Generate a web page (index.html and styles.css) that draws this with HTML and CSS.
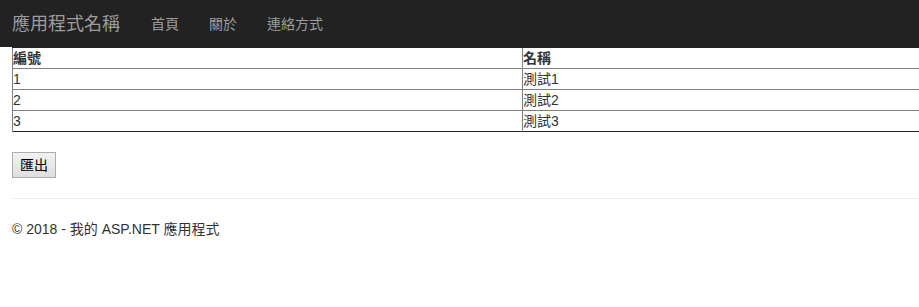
FILE: index.html
```html
<!DOCTYPE html>
<html lang="zh-Hant">
<head>
    <meta charset="UTF-8">
    <meta name="viewport" content="width=device-width, initial-scale=1.0">
    <title>首頁 - 我的 ASP.NET 應用程式</title>
    <link rel="stylesheet" href="styles.css">
</head>
<body>
    <div class="navbar">
        <a class="navbar-brand" href="#">應用程式名稱</a>
        <ul class="nav">
            <li><a href="#">首頁</a></li>
            <li><a href="#">關於</a></li>
            <li><a href="#">連絡方式</a></li>
        </ul>
    </div>

    <div class="body-content">
        <table class="grid">
            <thead>
                <tr>
                    <th class="col-id">編號</th>
                    <th>名稱</th>
                </tr>
            </thead>
            <tbody>
                <tr>
                    <td>1</td>
                    <td>測試1</td>
                </tr>
                <tr>
                    <td>2</td>
                    <td>測試2</td>
                </tr>
                <tr>
                    <td>3</td>
                    <td>測試3</td>
                </tr>
            </tbody>
        </table>

        <form class="export-form">
            <button type="button" class="btn-export">匯出</button>
        </form>

        <hr>
        <footer>
            <p>&copy; 2018 - 我的 ASP.NET 應用程式</p>
        </footer>
    </div>
</body>
</html>
```

FILE: styles.css
```css
html {
    overflow: hidden;
}
body {
    margin: 0;
    font-family: "Liberation Sans", Arial, "Noto Sans CJK TC", sans-serif;
    font-size: 14px;
    line-height: 20px;
    color: #333;
    background: #fff;
}
.navbar {
    display: flex;
    align-items: center;
    height: 47px;
    background: #222;
    padding-left: 12px;
}
.navbar-brand {
    font-size: 18px;
    line-height: 20px;
    color: #9d9d9d;
    text-decoration: none;
    margin-right: 31px;
}
.nav {
    display: flex;
    gap: 30px;
    list-style: none;
    margin: 0;
    padding: 0;
}
.nav a {
    display: block;
    color: #9d9d9d;
    text-decoration: none;
}
.body-content {
    padding: 0 0 20px 12px;
}
.grid {
    border-collapse: collapse;
    width: 1022px;
    border: 1px solid #222;
}
.grid th,
.grid td {
    padding: 0;
    text-align: left;
    border-left: 1px solid #808080;
    border-top: 1px solid #808080;
    height: 20px;
}
.grid th {
    font-weight: bold;
    border-top: 1px solid #222;
}
.grid .col-id {
    width: 509px;
}
.export-form {
    margin: 20px 0 0;
}
.btn-export {
    font-family: "Liberation Sans", Arial, "Noto Sans CJK TC", sans-serif;
    font-size: 14px;
    line-height: 20px;
    color: #000;
    background: linear-gradient(#f2f2f2, #dedede);
    border: 1px solid #adadad;
    border-radius: 0;
    padding: 2px 7px;
}
hr {
    margin: 20px 0;
    border: 0;
    border-top: 1px solid #eee;
}
footer p {
    margin: 0 0 10px;
}
```
